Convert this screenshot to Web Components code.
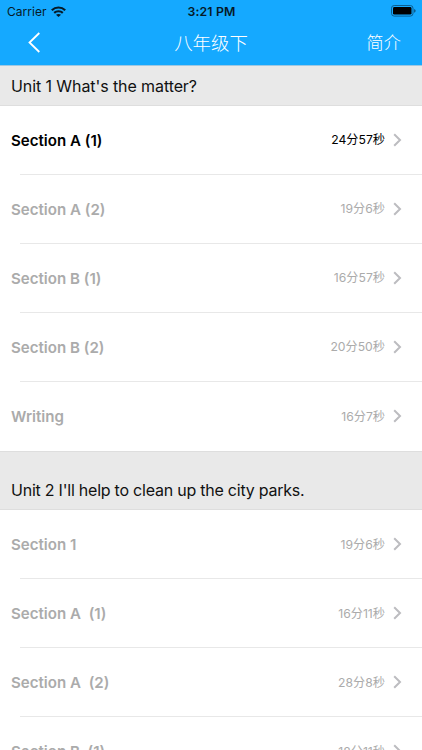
<!DOCTYPE html>
<html lang="zh-CN">
<head>
<meta charset="utf-8">
<title>八年级下</title>
<style>
html,body{margin:0;height:100%;overflow:hidden;background:#fff}
body{font-family:Inter,"Noto Sans CJK SC",sans-serif;color:#111}
</style>
</head>
<body>
<course-screen></course-screen>
<script>
const define = (name, html) => customElements.define(name, class extends HTMLElement {
  constructor() {
    super();
    this.attachShadow({ mode: 'open' }).innerHTML = html;
  }
});

define('status-bar', `<style>
:host{display:grid;grid-template-columns:1fr auto 1fr;align-items:center;height:22px;padding:0 6px 0 7px;box-sizing:border-box;color:#061a28}
.left{display:flex;align-items:center;gap:3px;font-size:12px;letter-spacing:.02px}
.left span{width:41px;white-space:nowrap}
.time{font-size:12.3px;font-weight:600;letter-spacing:.15px}
.right{display:flex;justify-content:flex-end;padding-bottom:1px}
svg{display:block}
</style>
<div class="left"><span>Carrier</span><svg width="15" height="11" viewBox="0 0 15 11" fill="none" stroke="#061a28" stroke-width="2.2"><path d="M.8 4.2C4.6.6 10.4.6 14.2 4.2M3.2 6.9c2.4-2.2 6.2-2.2 8.6 0"/><path d="M7.5 11 5 8.8c1.4-1.2 3.6-1.2 5 0z" fill="#061a28" stroke="none"/></svg></div>
<span class="time">3:21 PM</span>
<div class="right"><svg width="25" height="12" viewBox="0 0 25 12"><rect x=".5" y=".5" width="21.5" height="10.6" rx="2.7" fill="none" stroke="#0b5f91"/><rect x="2" y="2" width="18.5" height="7.6" rx="1.4" fill="#000"/><path d="M23.2 4v3.7q1.4-.5 1.4-1.85T23.2 4z" fill="#0b4d76"/></svg></div>`);

define('nav-bar', `<style>
:host{display:grid;grid-template-columns:1fr auto 1fr;align-items:center;height:41px;padding:0 28px;color:#fff;font-family:"Noto Sans CJK SC",sans-serif;font-size:18.4px;font-weight:300;line-height:26px}
.title{position:relative;top:-1px}
.action{justify-self:end;font-size:17.2px;margin-right:-7px;position:relative;top:-1px}
svg{display:block}
</style>
<svg width="13" height="21" viewBox="0 0 13 21" fill="none" stroke="#fff" stroke-width="1.8"><path d="M11.3 1 1.5 10.5 11.3 20"/></svg>
<span class="title"><slot></slot></span><span class="action"><slot name="action"></slot></span>`);

define('section-header', `<style>
:host{display:flex;align-items:flex-end;box-sizing:border-box;height:var(--h,40px);padding:0 11px 8px;background:#e9e9e9;border-top:1px solid var(--edge,#dedede);border-bottom:1px solid #dedede;font-size:16px;line-height:21px;color:#111;white-space:nowrap}
</style><span><slot></slot></span>`);

define('lesson-row', `<style>
:host{display:flex;align-items:center;box-sizing:border-box;height:69.15px;padding:0 20px 0 11px;color:#ababab;background:linear-gradient(#e8e8e8,#e8e8e8) 20px 100%/100% 1px no-repeat}
:host([active]){color:#000}
:host([last]){background:none}
.name{flex:1;font-size:15.1px;font-weight:600;white-space:pre}
.time{font-size:12.2px;margin-right:8px;line-height:18px}
svg{display:block;position:relative;top:-.5px}
</style>
<span class="name"><slot></slot></span><span class="time"><slot name="time"></slot></span>
<svg width="9" height="14" viewBox="0 0 9 14" fill="none" stroke="#bcbcc0" stroke-width="2"><path d="M1.2 1.3 7 7 1.2 12.7"/></svg>`);

const row = (name, time, attr = '') => `<lesson-row ${attr}>${name}<span slot="time">${time}</span></lesson-row>`;

define('course-screen', `<style>
:host{display:flex;flex-direction:column;height:750px;width:422px;overflow:hidden}
header{background:#15a9ff;flex:none;height:65px}
main{flex:1;min-height:0;overflow:hidden}
</style>
<header><status-bar></status-bar><nav-bar>八年级下<span slot="action">简介</span></nav-bar></header>
<main>
<section-header style="--h:40.5px;--edge:#9fc8e2;letter-spacing:-.09px">Unit 1 What's the matter?</section-header>
${row('Section A (1)', '24分57秒', 'active')}${row('Section A (2)', '19分6秒')}${row('Section B (1)', '16分57秒')}${row('Section B (2)', '20分50秒')}${row('Writing', '16分7秒', 'last')}
<section-header style="--h:58.75px;letter-spacing:-.23px">Unit 2 I'll help to clean up the city parks.</section-header>
${row('Section 1', '19分6秒')}${row('Section A&nbsp; (1)', '16分11秒')}${row('Section A&nbsp; (2)', '28分8秒')}${row('Section B&nbsp; (1)', '18分11秒')}
</main>`);
</script>
</body>
</html>
